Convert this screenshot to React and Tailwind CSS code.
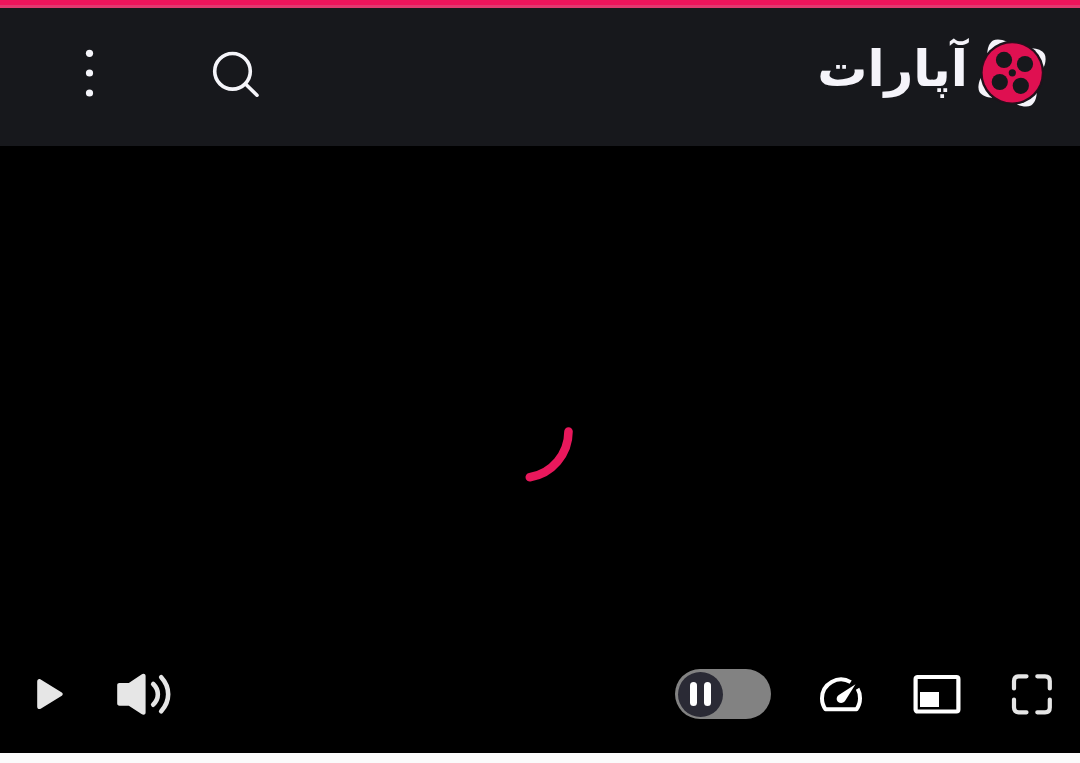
import { useState } from "react";

const corner = "M9.300 14C9.500 8.500 11.500 3.800 15 1.500 18.500 -.4 24 .3 28.800 2.600L30 12Z";

const ReelLogo = () => (
  <svg viewBox="0 0 68 68" className="size-[68px] shrink-0" aria-hidden="true">
    <g fill="#f5f4fa">
      <path d={corner} />
      <path d={corner} transform="rotate(90 34 34)" />
      <path d={corner} transform="rotate(180 34 34)" />
      <path d={corner} transform="rotate(270 34 34)" />
    </g>
    <circle cx="34.2" cy="33.8" r="32" fill="#17181c" />
    <circle cx="34.2" cy="33.8" r="31" fill="#2c0d1c" />
    <circle cx="34.2" cy="33.8" r="29.6" fill="#df1051" />
    <g fill="#17181c">
      <circle cx="26" cy="20.9" r="8.100" />
      <circle cx="47" cy="25" r="8.100" />
      <circle cx="42.8" cy="46.8" r="8.100" />
      <circle cx="21.8" cy="43" r="8.100" />
      <circle cx="34.3" cy="33.8" r="3.600" />
    </g>
  </svg>
);

const MoreIcon = () => (
  <svg viewBox="0 0 48 48" className="size-12" fill="#f5f5fa" aria-hidden="true">
    <circle cx="23.5" cy="4.3" r="3.6" />
    <circle cx="23.5" cy="24" r="3.6" />
    <circle cx="23.5" cy="44" r="3.6" />
  </svg>
);

const SearchIcon = () => (
  <svg viewBox="0 0 48 48" className="size-12" fill="none" stroke="#f5f5fa" strokeWidth="3.6" strokeLinecap="round" aria-hidden="true">
    <circle cx="20.5" cy="22.3" r="17.8" />
    <path d="M33.500 35 45 46.200" />
  </svg>
);

const Spinner = () => (
  <svg viewBox="0 0 96 96" className="size-24" fill="none" stroke="#e9185c" strokeWidth="8.6" strokeLinecap="round" role="status" aria-label="Loading">
    <path d="M76.5 29.5A46.5 46.5 0 0 1 37.8 75.2" />
  </svg>
);

const PlayIcon = () => (
  <svg viewBox="0 0 48 48" className="size-12" fill="#e6e6e6" aria-hidden="true">
    <path d="M13.200 11.500c0-2 1.700-3 3.500-2L37.800 22.500c1.300.8 1.300 2.400 0 3.200L16.700 38.700c-1.800 1-3.500 0-3.500-2Z" />
  </svg>
);

const VolumeIcon = () => (
  <svg viewBox="0 0 56 48" className="h-12 w-14" fill="#e6e6e6" aria-hidden="true">
    <path d="M3.500 13H12.800L25.500 4.500C27.500 3.200 29.600 4 29.600 6V42.500C29.600 44.600 27.500 45.500 25.500 44L12.800 35.700H3.500C2 35.700 1.200 34.800 1.200 33.500V15.200C1.200 13.800 2 13 3.500 13Z" />
    <g fill="none" stroke="#e6e6e6" strokeWidth="4.6" strokeLinecap="round">
      <path d="M37.200 14C43.400 20 43.400 28.700 37.200 34.700" />
      <path d="M45.200 7.300C54.500 17.500 54.500 31 45.200 41.200" />
    </g>
  </svg>
);

const SpeedIcon = () => (
  <svg viewBox="0 0 48 48" className="size-12" aria-hidden="true">
    <path
      d="M32.700 12.100A19 19 0 0 0 4 28.300C4 32.500 5.200 36.200 7.500 39.200H38.500C40.800 36.200 42 32.500 42 28.300 42 25 41.200 21.500 39.600 18.800"
      fill="none"
      stroke="#fff"
      strokeWidth="4"
      strokeLinejoin="round"
    />
    <path d="M37.500 14.300 27.500 30.200C25.800 33.200 22.400 33.800 20.200 31.900 18 29.900 18.300 26.700 20.800 24.900Z" fill="#fff" />
  </svg>
);

const PipIcon = () => (
  <svg viewBox="0 0 48 48" className="size-12" aria-hidden="true">
    <rect x="2.600" y="7" width="42.800" height="34.500" rx="2" fill="none" stroke="#fff" strokeWidth="4.200" />
    <rect x="7" y="22" width="19" height="15" fill="#fff" />
  </svg>
);

const FullscreenIcon = () => (
  <svg viewBox="0 0 48 48" className="size-12" fill="none" stroke="#e6e6e6" strokeWidth="4.200" strokeLinecap="round" strokeLinejoin="round" aria-hidden="true">
    <path d="M6 18.500V11Q6 6.300 10.700 6.300H18.500" />
    <path d="M29.300 6.300H37Q41.800 6.300 41.800 11V18.500" />
    <path d="M41.800 29.500V37.500Q41.800 42.300 37 42.300H29.300" />
    <path d="M18.500 42.300H10.700Q6 42.300 6 37.500V29.500" />
  </svg>
);

const ControlButton = ({ label, children }) => (
  <button type="button" aria-label={label} className="shrink-0 cursor-pointer">
    {children}
  </button>
);

const Header = () => (
  <header className="flex h-[138px] items-center justify-between bg-[#17181c] pr-[34px] pb-2 pl-[66px]">
    <div className="flex items-center gap-[98px]">
      <ControlButton label="More">
        <MoreIcon />
      </ControlButton>
      <ControlButton label="Search">
        <SearchIcon />
      </ControlButton>
    </div>
    <a href="#home" className="flex items-center gap-2.5">
      <span lang="fa" dir="rtl" className="pb-2 font-['DejaVu_Sans',sans-serif] text-[50px] leading-none font-bold text-[#f5f4fa]">
        آپارات
      </span>
      <ReelLogo />
    </a>
  </header>
);

const Player = () => {
  const [autoplay, setAutoplay] = useState(false);

  return (
    <main className="relative grid aspect-[1080/607] w-full place-items-center bg-black">
      <Spinner />

      {/* Controls */}
      <div className="absolute inset-x-0 bottom-0 flex h-[118px] items-center justify-between px-6">
        <div className="flex items-center gap-11">
          <ControlButton label="Play">
            <PlayIcon />
          </ControlButton>
          <ControlButton label="Volume">
            <VolumeIcon />
          </ControlButton>
        </div>

        <div className="flex items-center gap-[47px]">
          <label className="flex h-[50px] w-24 cursor-pointer items-center rounded-full bg-[#828282] px-[3px] has-checked:justify-end">
            <input
              type="checkbox"
              aria-label="Autoplay"
              checked={autoplay}
              onChange={(e) => setAutoplay(e.target.checked)}
              className="sr-only"
            />
            <span className="flex size-[45px] items-center justify-center gap-[7px] rounded-full bg-[#2a2a35]">
              <span className="h-6 w-[7px] rounded-full bg-white" />
              <span className="h-6 w-[7px] rounded-full bg-white" />
            </span>
          </label>
          <ControlButton label="Playback speed">
            <SpeedIcon />
          </ControlButton>
          <ControlButton label="Picture in picture">
            <PipIcon />
          </ControlButton>
          <ControlButton label="Fullscreen">
            <FullscreenIcon />
          </ControlButton>
        </div>
      </div>
    </main>
  );
};

const App = () => (
  <div className="min-h-screen bg-[#fbfbfb]">
    <div className="h-2 border-b-[3px] border-[#e2386f] bg-[#ee145b]" />
    <Header />
    <Player />
  </div>
);

export default App;
